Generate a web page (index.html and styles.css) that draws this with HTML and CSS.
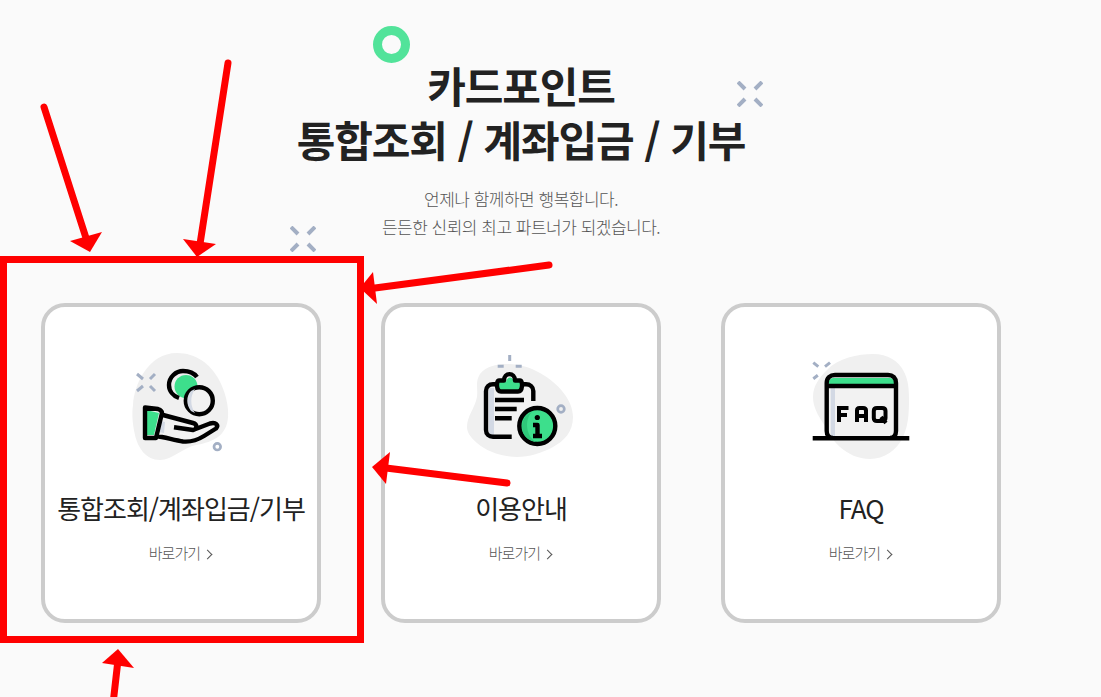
FILE: index.html
```html
<!DOCTYPE html>
<html lang="ko">
<head>
    <meta charset="UTF-8">
    <title>카드포인트 통합조회 / 계좌입금 / 기부</title>
    <link rel="stylesheet" href="styles.css">
</head>
<body>
    <div class="page">
        <div class="intro">
            <h1>카드포인트<br>통합조회 / 계좌입금 / 기부</h1>
            <p>언제나 함께하면 행복합니다.<br>든든한 신뢰의 최고 파트너가 되겠습니다.</p>
        </div>

        <!-- decorations around the title -->
        <span class="ring"></span>
        <svg class="sparkle sparkle-right" viewBox="0 0 26 26"><path d="M1 1l7 7M25 1l-7 7M1 25l7-7M25 25l-7-7"/></svg>
        <svg class="sparkle sparkle-left" viewBox="0 0 26 26"><path d="M1 1l7 7M25 1l-7 7M1 25l7-7M25 25l-7-7"/></svg>

        <div class="cards">
            <a class="card" href="#">
                <svg class="icon" viewBox="0 0 110 110">
                    <path class="blob" d="M51 3C70 3 84 14 92 28C100 42 103 58 102 67C101 85 88 92 70 95C58 97 46 110 34 110C20 110 12 98 9 85C6 72 6 62 7 55C8 35 22 3 51 3z"/>
                    <path class="mark" d="M11 24l6 5M29 24l-5 5M11 41l6-5M29 41l-5-5"/>
                    <circle class="dot" cx="91.3" cy="96.7" r="3.3"/>
                    <circle class="fill-green" cx="60" cy="36.5" r="11.5"/>
                    <path class="line" d="M53 48C47 46 43 41 43 35C43 27 50 21 57 21C63 21 68 23 71 27"/>
                    <circle class="fill-paper line" cx="73.3" cy="50.7" r="13.5"/>
                    <path class="fill-shade" d="M65 41C60 46 60 55 65 61L69 63C64 56 64 46 69 39z"/>
                    <path class="fill-paper" d="M32 64L67 73L71 79L84 73L91 76L78 86C70 91 62 92 57 91L29 85z"/>
                    <path class="fill-shade" d="M34 71L39 72L38 83L32 82z"/>
                    <path class="fill-green" d="M20 60L33 63L28 85H20z"/>
                    <path class="line" d="M19 57.5L32 59C35 60 36 61 36 63L30 88H19zM37 65L67 73C71 74 72 79 67 80L48 77.3M67 80L84 73.5C90 72 93 75 90 78.5L78 86C70 91 62 92 57 91.5C48 90 38 87 30 86"/>
                </svg>
                <strong>통합조회/계좌입금/기부</strong>
                <span class="more">바로가기 <i class="chev"></i></span>
            </a>
            <a class="card" href="#">
                <svg class="icon" viewBox="0 0 110 110">
                    <path class="blob" d="M14 24C20 16 32 14 41 14C55 14 65 18 74 23C92 33 107 50 107 67C107 82 98 91 87 97C76 103 63 107 51 107C36 107 20 101 11 93C4 87 1 82 1 77C1 66 9 58 11 47C12 37 9 32 14 24z"/>
                    <path class="mark" d="M43.7 5v6M31.7 16.3h6M49.7 16.3h6"/>
                    <circle class="dot" cx="95" cy="59" r="3.3"/>
                    <path class="fill-paper" d="M21 35H67V87H21z"/>
                    <path class="fill-shade" d="M23 38h5v47h-5z"/>
                    <path class="fill-green" d="M32 32h8c1-6 7-6 8 0h7v9H32z"/>
                    <path class="line" d="M31 34.3H27C23 34.3 20 37 20 41V80C20 84 23 86.7 27 86.7H45.7M67.3 51V41C67.3 37 64 34.3 60 34.3H55"/>
                    <path class="line" d="M33 30.5H38C38 22 49 22 49 30.5H54C57 30.5 57 41.5 52 41.5H35C30 41.5 30 30.5 33 30.5zM29 50H58M29 59H50.7M29 68.3H45.7"/>
                    <circle class="fill-green line" cx="71.3" cy="76" r="18"/>
                    <path class="fill-dark" d="M62 64C54 70 54 83 62 89C66 91 68 92 70 92C60 86 58 70 66 62z"/>
                    <circle class="info-dot" cx="71.3" cy="67.5" r="2.6"/>
                    <path class="line" d="M67 75h4.5v11M67 86h9"/>
                </svg>
                <strong>이용안내</strong>
                <span class="more">바로가기 <i class="chev"></i></span>
            </a>
            <a class="card" href="#">
                <svg class="icon" viewBox="0 0 110 110">
                    <path class="blob" d="M21 20C32 8 52 4 67 4C82 4 92 11 97 20C103 30 103 42 103 50C103 65 102 76 97 87C91 100 78 109 64 109C52 109 42 104 34 97C26 90 22 81 17 73C12 65 7 57 7 47C7 36 13 28 21 20z"/>
                    <path class="mark" d="M7.3 12.7l5 4M24 12.7l-5 4M7.3 28.7l4.5-3.5"/>
                    <path class="fill-paper" d="M21 34H90V88H21z"/>
                    <path class="fill-shade" d="M24.7 36H29V86H24.7z"/>
                    <path class="fill-green" d="M23 34V32C23 29 25 28 28 28H83C86 28 88 29 88 32V34z"/>
                    <path class="line" d="M20.7 81V33C20.7 28 24 25 29 25H82C87 25 90 28 90 33V81C90 85 88 88 84 88M20.7 81C20.7 85 23 88 27 88M20.7 36H90M6.7 88.3H103.3"/>
                    <path class="line-faq" d="M33 72V58H42.5M33 65H41M51 72V60.5C51 58.8 52 58 53.5 58H57C59 58 60 59 60 60.5V72M51 66H60M71 58H76C78 58 79.5 59 79.5 61V68C79.5 70 78 71 76 71H71C69 71 67.8 70 67.8 68V61C67.8 59 69 58 71 58zM75 67L80 73"/>
                </svg>
                <strong>FAQ</strong>
                <span class="more">바로가기 <i class="chev"></i></span>
            </a>
        </div>

        <!-- red markup drawn over the page -->
        <div class="red-box"></div>
        <svg class="arrows" viewBox="0 0 1101 697">
            <path d="M44 107L86 238"/>
            <path d="M228 63L200 244"/>
            <path d="M549 265L375 288"/>
            <path d="M507 483L386 468"/>
            <path d="M113 704L118 660"/>
            <polygon points="70,241 102,232 90,252"/>
            <polygon points="183,239 216,244 197,257"/>
            <polygon points="373,272 377,304 360,288"/>
            <polygon points="390,452 386,484 372,467"/>
            <polygon points="102,663 134,668 118,649"/>
        </svg>
    </div>
</body>
</html>
```

FILE: styles.css
```css
body {
    margin: 0;
    background-color: #fafafa;
    color: #222;
    font-family: "Noto Sans CJK KR", "Noto Sans", sans-serif;
}

.page {
    position: relative;
    width: 1101px;
    height: 697px;
    overflow: hidden;
    padding-left: 41px;
    box-sizing: border-box;
}

.intro {
    width: 960px;
    padding-top: 58px;
    text-align: center;
}

.intro h1 {
    margin: 0;
    font-size: 42px;
    line-height: 54px;
    font-weight: 700;
    letter-spacing: -1.1px;
}

.intro p {
    margin: 19px 0 0;
    font-size: 17px;
    line-height: 28px;
    font-weight: 300;
    letter-spacing: -0.5px;
    color: #555;
}

.ring {
    position: absolute;
    left: 373px;
    top: 26px;
    width: 37px;
    height: 37px;
    box-sizing: border-box;
    border: 9px solid #52e39a;
    border-radius: 50%;
}

.sparkle {
    position: absolute;
    width: 26px;
    height: 26px;
    fill: none;
    stroke: #a3afc4;
    stroke-width: 4;
}

.sparkle-right { left: 737px; top: 81px; }
.sparkle-left { left: 290px; top: 226px; }

.cards {
    display: flex;
    gap: 60px;
    margin-top: 62px;
}

.card {
    display: flex;
    flex-direction: column;
    align-items: center;
    width: 280px;
    height: 320px;
    box-sizing: border-box;
    padding-top: 43px;
    background-color: #fff;
    border: 4px solid #ccc;
    border-radius: 24px;
    color: inherit;
    text-decoration: none;
}

.card strong {
    margin-top: 29px;
    font-size: 26px;
    line-height: 38px;
    font-weight: 400;
    letter-spacing: -1px;
    white-space: nowrap;
}

.more {
    margin-top: 16px;
    font-size: 15px;
    line-height: 20px;
    font-weight: 300;
    letter-spacing: -1px;
    color: #555;
}

.chev {
    display: inline-block;
    width: 7px;
    height: 7px;
    margin-left: 3px;
    box-sizing: border-box;
    border-top: 1px solid #555;
    border-right: 1px solid #555;
    transform: translate(-2px, -1px) rotate(45deg);
}

.icon {
    flex: none;
    width: 110px;
    height: 110px;
}

.blob { fill: #f0f0f0; }
.mark { fill: none; stroke: #a3afc4; stroke-width: 3; }
.dot { fill: none; stroke: #a3afc4; stroke-width: 2.7; }
.fill-green { fill: #3ddf8c; }
.fill-dark { fill: #2fc97a; }
.fill-paper { fill: #f2f2f2; }
.fill-shade { fill: #d3d9e4; }
.line { stroke: #000; stroke-width: 4.4; stroke-linejoin: round; }
path.line { fill: none; }
.info-dot { fill: #000; }
.line-faq { fill: none; stroke: #000; stroke-width: 4; }

.red-box {
    position: absolute;
    left: 0;
    top: 256px;
    width: 364px;
    height: 387px;
    box-sizing: border-box;
    border: 7px solid #ff0000;
}

.arrows {
    position: absolute;
    left: 0;
    top: 0;
    width: 1101px;
    height: 697px;
    pointer-events: none;
}

.arrows path { fill: none; stroke: #ff0000; stroke-width: 7; stroke-linecap: round; }
.arrows polygon { fill: #ff0000; }
```
